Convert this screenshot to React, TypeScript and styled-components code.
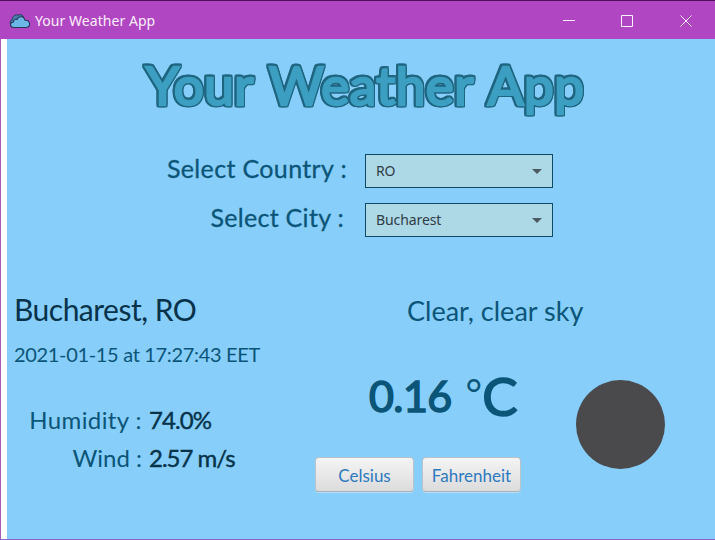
import React, { useState } from "react";
import styled, { createGlobalStyle } from "styled-components";

const GlobalStyle = createGlobalStyle`
  * { box-sizing: border-box; }
  body { margin: 0; overflow: hidden; }
`;

const script = `Lato, "Noto Sans", sans-serif`;
const system = `"Noto Sans", "Open Sans", sans-serif`;
const ink = "#0b5578";
const darkInk = "#06324a";
const outline = "#1f6580";

const Window = styled.div`
  width: 715px;
  height: 540px;
  display: flex;
  flex-direction: column;
  border-bottom: 1px solid #8a62c8;
  background: #fff;
`;

const TitleBar = styled.header`
  height: 39px;
  flex: none;
  display: flex;
  align-items: center;
  padding: 1px 0 0 9px;
  border-top: 1px solid #4c1057;
  background: #b146c2;
  color: #fbeffc;
`;

const AppName = styled.span`
  flex: 1;
  margin-left: 4px;
  font: 14px/20px ${system};
  letter-spacing: 0.05px;
`;

const Controls = styled.div`
  display: flex;
`;

const WindowControl = styled.span`
  width: 58.5px;
  display: flex;
  justify-content: center;
`;

const Body = styled.main`
  flex: 1;
  display: flex;
  flex-direction: column;
  border-left: 1px solid #a45cb8;
  padding-left: 6px;
`;

const Scene = styled.div`
  flex: 1;
  background: #87cefa;
  font-family: ${script};
  color: ${ink};
  white-space: nowrap;
`;

const Banner = styled.h1`
  margin: 0 0 28px;
  padding-left: 139px;
  font-size: 53px;
  line-height: 91px;
  height: 87px;
  font-weight: 400;
  letter-spacing: 0.5px;
  word-spacing: 2.5px;
  color: #3c9fc2;
  -webkit-text-stroke: 2.5px #3c9fc2;
  stroke-linejoin: round;
  filter: drop-shadow(1.5px 0 ${outline}) drop-shadow(-1.5px 0 ${outline})
    drop-shadow(0 1.5px ${outline}) drop-shadow(0 -1.5px ${outline});
`;

const Form = styled.div`
  display: grid;
  grid-template-columns: 340px 188px;
  grid-auto-rows: 34px;
  column-gap: 18px;
  row-gap: 15px;
`;

const FieldLabel = styled.label<{ $inset?: number; $spacing: number }>`
  padding-right: ${(p) => p.$inset ?? 0}px;
  text-align: right;
  font-size: 25px;
  line-height: 28px;
  letter-spacing: ${(p) => p.$spacing}px;
  -webkit-text-stroke: 0.3px ${ink};
`;

const Select = styled.div`
  display: flex;
  align-items: center;
  justify-content: space-between;
  padding: 0 10px;
  border: 1px solid #0d4a66;
  background: #add8e6;
  color: #303c45;
  font: 14px/20px ${system};
  letter-spacing: -0.1px;
`;

const Report = styled.section`
  display: grid;
  grid-template-columns: 301px 1fr;
  padding: 54px 0 0 7px;
`;

const Place = styled.h2`
  margin: 0;
  font-size: 30px;
  line-height: 36px;
  font-weight: 400;
  letter-spacing: -0.5px;
  color: ${darkInk};
`;

const Timestamp = styled.p`
  margin: 14px 0 0;
  font-size: 20px;
  line-height: 26px;
  letter-spacing: -0.33px;
`;

const Metrics = styled.dl`
  display: grid;
  grid-template-columns: 128px auto;
  column-gap: 7px;
  row-gap: 8px;
  margin: 38px 0 0;
  font-size: 24px;
  line-height: 30px;
`;

const MetricName = styled.dt<{ $spacing: number }>`
  text-align: right;
  letter-spacing: ${(p) => p.$spacing}px;
`;

const MetricValue = styled.dd<{ $spacing: number }>`
  margin: 0;
  color: ${darkInk};
  letter-spacing: ${(p) => p.$spacing}px;
  -webkit-text-stroke: 0.4px ${darkInk};
`;

const Summary = styled.p`
  margin: 2px 0 0 92px;
  font-size: 27px;
  line-height: 36px;
`;

const Conditions = styled.div`
  display: flex;
  gap: 55px;
`;

const Reading = styled.div`
  width: 206px;
`;

const Temperature = styled.div`
  display: flex;
  align-items: flex-start;
  margin: 37px 0 0 54px;
  height: 91px;
  font-size: 43px;
  line-height: 60px;
  letter-spacing: -0.6px;
  -webkit-text-stroke: 1.6px ${ink};
`;

const Degree = styled.span`
  margin-left: 14px;
  font-size: 40px;
  line-height: 54px;
  letter-spacing: 0;
  -webkit-text-stroke: 0;
`;

const Scale = styled.span`
  font-size: 53px;
  -webkit-text-stroke: 1.6px ${ink};
`;

const Buttons = styled.div`
  display: flex;
  gap: 8px;
`;

const UnitButton = styled.button`
  flex: none;
  width: 99px;
  height: 35px;
  padding: 3px 0 0;
  border: 1px solid #b9c3c9;
  border-bottom-color: #aab2b7;
  border-radius: 4px;
  background: linear-gradient(#f4f4f4, #dcdcdc);
  box-shadow: 0 1px 0 #b9def5;
  font: 17px/22px ${script};
  color: #2d7abf;
`;

const NightSky = styled.div`
  width: 89px;
  height: 89px;
  margin-top: 51px;
  border-radius: 50%;
  background: #4a4a4c;
`;

const CloudIcon = () => (
  <svg width="22" height="16" viewBox="0 0 22 16">
    <path
      d="M3.5 12.5C0 11.5 1 7 3.2 6.8 3 3 7 0.8 9.2 2.2 11 .8 14 2 14.5 4L10 12Z"
      fill="#477eac"
      stroke="#28385a"
    />
    <path
      d="M4.5 14.5C.5 14.3.5 9.5 4.4 9 4.5 6.5 6.5 6 8 6.5 9.5 2.6 15 2.8 16 7.2 21.7 6.8 22 14.2 17.5 14.5Z"
      fill="#6bb8e8"
      stroke="#28385a"
      strokeWidth="1.1"
    />
  </svg>
);

const Arrow = () => (
  <svg width="10" height="5" viewBox="0 0 10 5">
    <path d="M0 0H10L5 5Z" fill="#4d5b61" />
  </svg>
);

const controlPaths = ["M0 5.5H12", "M.5 .5H11.5V11.5H.5Z", "M.5 .5L11.5 11.5M11.5 .5L.5 11.5"];

export default function App() {
  const [celsius, setCelsius] = useState(true);
  return (
    <>
      <GlobalStyle />
      <Window>
        <TitleBar>
          <CloudIcon />
          <AppName>Your Weather App</AppName>
          <Controls>
            {controlPaths.map((d) => (
              <WindowControl key={d}>
                <svg width="12" height="12" viewBox="0 0 12 12">
                  <path d={d} fill="none" stroke="#fbeffc" />
                </svg>
              </WindowControl>
            ))}
          </Controls>
        </TitleBar>
        <Body>
          <Scene>
            <Banner>Your Weather App</Banner>
            <Form>
              <FieldLabel $spacing={0.35}>Select Country :</FieldLabel>
              <Select>
                RO <Arrow />
              </Select>
              <FieldLabel $spacing={0.3} $inset={3}>
                Select City :
              </FieldLabel>
              <Select>
                Bucharest <Arrow />
              </Select>
            </Form>
            <Report>
              <div>
                <Place>Bucharest, RO</Place>
                <Timestamp>2021-01-15 at 17:27:43 EET</Timestamp>
                <Metrics>
                  <MetricName $spacing={0.4}>Humidity :</MetricName>
                  <MetricValue $spacing={-0.9}>74.0%</MetricValue>
                  <MetricName $spacing={0}>Wind :</MetricName>
                  <MetricValue $spacing={-1}>2.57 m/s</MetricValue>
                </Metrics>
              </div>
              <div>
                <Summary>Clear, clear sky</Summary>
                <Conditions>
                  <Reading>
                    <Temperature>
                      {celsius ? "0.16" : "32.29"}
                      <Degree>°</Degree>
                      <Scale>{celsius ? "C" : "F"}</Scale>
                    </Temperature>
                    <Buttons>
                      <UnitButton onClick={() => setCelsius(true)}>Celsius</UnitButton>
                      <UnitButton onClick={() => setCelsius(false)}>Fahrenheit</UnitButton>
                    </Buttons>
                  </Reading>
                  <NightSky />
                </Conditions>
              </div>
            </Report>
          </Scene>
        </Body>
      </Window>
    </>
  );
}
